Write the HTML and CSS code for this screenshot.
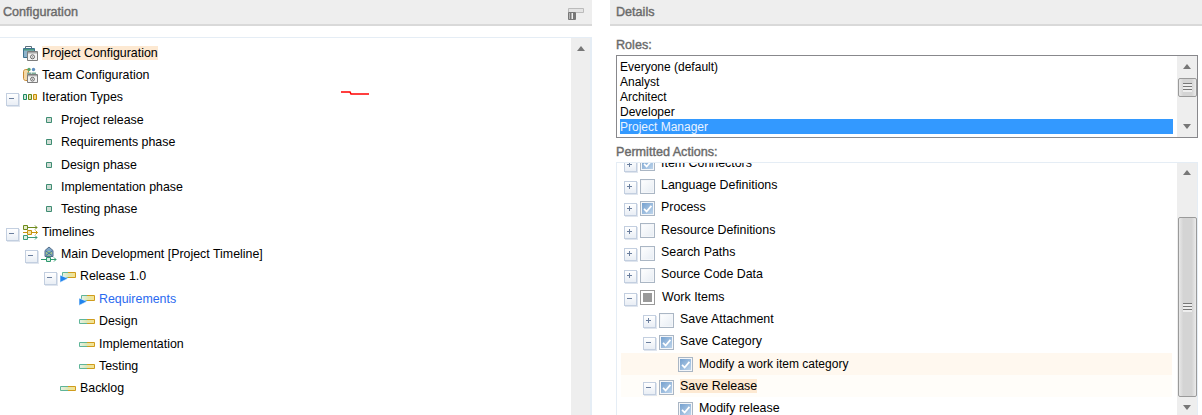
FILE: index.html
```html
<!DOCTYPE html>
<html lang="en">
<head>
<meta charset="utf-8">
<title>Configuration</title>
<link rel="stylesheet" href="styles.css">
</head>
<body>
<svg class="defs" aria-hidden="true">
  <defs>
    <linearGradient id="barfill" x1="0" x2="1" y1="0" y2="0">
      <stop offset="0" stop-color="#e4f2ea"/><stop offset=".5" stop-color="#dfe6b0"/><stop offset="1" stop-color="#fae28a"/>
    </linearGradient>
    <symbol id="i-project" viewBox="0 0 16 16">
      <path d="M1.500 3.500h11v9h-11z" fill="#8fb4cc" stroke="#3f7391"/>
      <path d="M3.500 3V1.500h6V3" fill="none" stroke="#5b6f7c"/>
      <path d="M2 4h10v1.500H2z" fill="#4d9a7d"/>
      <path d="M5.500 6.500h10v9h-10z" fill="#f3f3f3" stroke="#7d7d7d"/>
      <path d="M6 7h9v1.500H6z" fill="#a9a9a9"/>
      <circle cx="10.500" cy="11.800" r="2" fill="none" stroke="#666"/>
      <circle cx="10.500" cy="11.800" r=".6" fill="#666"/>
    </symbol>
    <symbol id="i-team" viewBox="0 0 16 16">
      <path d="M1.500 4.500c0-1 1-2 2-2h3v11h-3c-1 0-2-1-2-2z" fill="#f4d9a8" stroke="#c98a32"/>
      <circle cx="7" cy="2.500" r="1.700" fill="#5aa56a"/>
      <circle cx="11.500" cy="2.500" r="1.700" fill="#5f8fc0"/>
      <path d="M5 7V5.500h4V7zM9.500 7V5.500h4.500V7z" fill="#7fae9a"/>
      <path d="M5.500 7.500h10v8h-10z" fill="#f3f3f3" stroke="#7d7d7d"/>
      <path d="M6 8h9v1.300H6z" fill="#a9a9a9"/>
      <circle cx="10.500" cy="12.200" r="1.900" fill="none" stroke="#666"/>
      <circle cx="10.500" cy="12.200" r=".6" fill="#666"/>
    </symbol>
    <symbol id="i-iter" viewBox="0 0 16 16">
      <path d="M1.500 5.500h3v5h-3z" fill="#cfe4d8" stroke="#1f8a60"/>
      <path d="M6.500 5.500h3v5h-3z" fill="#dbe4b0" stroke="#64851a"/>
      <path d="M11.500 5.500h3v5h-3z" fill="#f2d98a" stroke="#c48c08"/>
    </symbol>
    <symbol id="i-bullet" viewBox="0 0 16 16">
      <path d="M5.500 5.500h5v5h-5z" fill="#cfdcd4" stroke="#3f8d73"/>
    </symbol>
    <symbol id="i-timelines" viewBox="0 0 16 16">
      <path d="M4 3.500h11M13 1.500l2 2-2 2" fill="none" stroke="#6d8a1c"/>
      <path d="M1.500 1.500h4v4h-4z" fill="#e6ecc8" stroke="#6d8a1c"/>
      <path d="M1 8.500h14.500M13.500 6.500l2 2-2 2" fill="none" stroke="#c8930f"/>
      <path d="M5.500 6.500h4v4h-4z" fill="#f4e4a8" stroke="#c8930f"/>
      <path d="M4 13.500h11M13 11.500l2 2-2 2" fill="none" stroke="#3f9a78"/>
      <path d="M1.500 11.500h4v4h-4z" fill="#dcefe6" stroke="#3f9a78"/>
    </symbol>
    <symbol id="i-main" viewBox="0 0 16 16">
      <path d="M4 4.500 8 1l4 3.500v6H4z" fill="#7fa6c8" stroke="#566f88"/>
      <path d="M5 5h6v4.500H5z" fill="#9fc28a"/>
      <path d="M5 9.500 11 5M5 5l6 4.500" stroke="#3c6fb0" fill="none"/>
      <path d="M0 13.500h15M13 11.500l2 2-2 2" fill="none" stroke="#2f9a6f"/>
      <path d="M5.500 11.500h4v4h-4z" fill="#d8efe4" stroke="#2f9a6f"/>
    </symbol>
    <symbol id="i-bar" viewBox="0 0 16 16">
      <path d="M.5 6.500h15v4H.5z" fill="url(#barfill)"/>
      <path d="M8 6.500H.5v4H8" fill="none" stroke="#5fb598"/>
      <path d="M8 6.500h7.500v4H8" fill="none" stroke="#cf9c1e"/>
    </symbol>
    <symbol id="i-release" viewBox="0 0 16 16">
      <path d="M2.500 4.500h13v5h-13z" fill="url(#barfill)"/>
      <path d="M8 4.500H2.500v5H8" fill="none" stroke="#5fb598"/>
      <path d="M8 4.500h7.500v5H8" fill="none" stroke="#cf9c1e"/>
      <path d="M0 7v7.500L8 10.500z" fill="#2185ee" stroke="#fff" stroke-width=".6"/>
    </symbol>
    <symbol id="i-check" viewBox="0 0 15 15">
      <path d="M3.500 8l3 3L12 4.500" fill="none" stroke="#fff" stroke-width="2"/>
    </symbol>
  </defs>
</svg>

<main class="app">
  <section class="pane">
    <header class="pane-head">
      <h2 class="pane-title">Configuration</h2>
      <svg class="restore" viewBox="0 0 16 12" width="16" height="12" aria-hidden="true">
        <path d="M.5 .5h15v4H.5z" fill="#e4e4e4" stroke="#bbb"/>
        <path d="M.5 4.500h7v7h-7z" fill="#eee" stroke="#777"/>
        <path d="M1.500 5h2v6h-2zM5 5h2v6H5z" fill="#777"/>
      </svg>
    </header>
    <div class="tree-box config-box">
      <div class="tree-scroll">
        <div class="row lv0"><span class="exp none"></span><svg class="ic"><use href="#i-project"/></svg><span class="lbl sel">Project Configuration</span></div>
        <div class="row lv0"><span class="exp none"></span><svg class="ic"><use href="#i-team"/></svg><span class="lbl">Team Configuration</span></div>
        <div class="row lv0"><span class="exp minus"></span><svg class="ic"><use href="#i-iter"/></svg><span class="lbl">Iteration Types</span></div>
        <div class="row lv1"><span class="exp none"></span><svg class="ic"><use href="#i-bullet"/></svg><span class="lbl">Project release</span></div>
        <div class="row lv1"><span class="exp none"></span><svg class="ic"><use href="#i-bullet"/></svg><span class="lbl">Requirements phase</span></div>
        <div class="row lv1"><span class="exp none"></span><svg class="ic"><use href="#i-bullet"/></svg><span class="lbl">Design phase</span></div>
        <div class="row lv1"><span class="exp none"></span><svg class="ic"><use href="#i-bullet"/></svg><span class="lbl">Implementation phase</span></div>
        <div class="row lv1"><span class="exp none"></span><svg class="ic"><use href="#i-bullet"/></svg><span class="lbl">Testing phase</span></div>
        <div class="row lv0"><span class="exp minus"></span><svg class="ic"><use href="#i-timelines"/></svg><span class="lbl">Timelines</span></div>
        <div class="row lv1"><span class="exp minus"></span><svg class="ic"><use href="#i-main"/></svg><span class="lbl">Main Development [Project Timeline]</span></div>
        <div class="row lv2"><span class="exp minus"></span><svg class="ic"><use href="#i-release"/></svg><span class="lbl">Release 1.0</span></div>
        <div class="row lv3"><span class="exp none"></span><svg class="ic"><use href="#i-release"/></svg><span class="lbl link">Requirements</span></div>
        <div class="row lv3"><span class="exp none"></span><svg class="ic"><use href="#i-bar"/></svg><span class="lbl">Design</span></div>
        <div class="row lv3"><span class="exp none"></span><svg class="ic"><use href="#i-bar"/></svg><span class="lbl">Implementation</span></div>
        <div class="row lv3"><span class="exp none"></span><svg class="ic"><use href="#i-bar"/></svg><span class="lbl">Testing</span></div>
        <div class="row lv2"><span class="exp none"></span><svg class="ic"><use href="#i-bar"/></svg><span class="lbl">Backlog</span></div>
      </div>
      <div class="sbar config-sbar"><span class="arrow up"></span></div>
    </div>
    <svg class="scribble" viewBox="0 0 28 4" width="28" height="4" aria-hidden="true">
      <path d="M0 1h9l1 2h18" fill="none" stroke="#f00" stroke-width="1.600"/>
    </svg>
  </section>

  <section class="pane details">
    <header class="pane-head">
      <h2 class="pane-title">Details</h2>
    </header>
    <div class="details-body">
      <div class="field-label roles-label">Roles:</div>
      <div class="listbox">
        <ul class="options">
          <li>Everyone (default)</li>
          <li>Analyst</li>
          <li>Architect</li>
          <li>Developer</li>
          <li class="picked">Project Manager</li>
        </ul>
        <div class="sbar list-sbar">
          <span class="arrow up"></span>
          <span class="thumb small"><span class="grip"></span></span>
          <span class="arrow down"></span>
        </div>
      </div>
      <div class="field-label actions-label">Permitted Actions:</div>
      <div class="tree-box actions-box">
        <div class="tree-scroll actions-scroll">
          <div class="actions-inner">
            <div class="row act lv0"><span class="exp plus"></span><span class="cb on"><svg class="tick"><use href="#i-check"/></svg></span><span class="lbl">Item Connectors</span></div>
            <div class="row act lv0"><span class="exp plus"></span><span class="cb"></span><span class="lbl">Language Definitions</span></div>
            <div class="row act lv0"><span class="exp plus"></span><span class="cb on"><svg class="tick"><use href="#i-check"/></svg></span><span class="lbl">Process</span></div>
            <div class="row act lv0"><span class="exp plus"></span><span class="cb"></span><span class="lbl">Resource Definitions</span></div>
            <div class="row act lv0"><span class="exp plus"></span><span class="cb"></span><span class="lbl">Search Paths</span></div>
            <div class="row act lv0"><span class="exp plus"></span><span class="cb"></span><span class="lbl">Source Code Data</span></div>
            <div class="row act lv0"><span class="exp minus"></span><span class="cb mixed"></span><span class="lbl">Work Items</span></div>
            <div class="row act lv1"><span class="exp plus"></span><span class="cb"></span><span class="lbl">Save Attachment</span></div>
            <div class="row act lv1"><span class="exp minus"></span><span class="cb on"><svg class="tick"><use href="#i-check"/></svg></span><span class="lbl">Save Category</span></div>
            <div class="row act lv2 hl"><span class="exp none"></span><span class="cb on"><svg class="tick"><use href="#i-check"/></svg></span><span class="lbl tight">Modify a work item category</span></div>
            <div class="row act lv1 hl-soft"><span class="exp minus"></span><span class="cb on"><svg class="tick"><use href="#i-check"/></svg></span><span class="lbl sel">Save Release</span></div>
            <div class="row act lv2"><span class="exp none"></span><span class="cb on"><svg class="tick"><use href="#i-check"/></svg></span><span class="lbl">Modify release</span></div>
          </div>
        </div>
        <div class="sbar actions-sbar">
          <span class="arrow up"></span>
          <span class="thumb large"><span class="grip"></span></span>
          <span class="arrow down"></span>
        </div>
      </div>
    </div>
  </section>
</main>
</body>
</html>
```
FILE: styles.css
```css
* { box-sizing: border-box; }

html, body {
  margin: 0;
  height: 415px;
  overflow: hidden;
  background: #fff;
  font-family: "Liberation Sans", Arial, sans-serif;
  font-size: 12px;
  color: #000;
}

.defs { position: absolute; width: 0; height: 0; }

.app {
  display: flex;
  gap: 18px;
  height: 415px;
}

.pane {
  position: relative;
  flex: 0 0 592px;
  display: flex;
  flex-direction: column;
}

.pane-head {
  flex: none;
  height: 26px;
  padding: 0 8px 0 3px;
  display: flex;
  align-items: center;
  justify-content: space-between;
  background: #eee;
  border-bottom: 2px solid #d9d9d9;
}

.details .pane-head { padding-left: 6px; }

.pane-title {
  margin: 0;
  font-size: 12.6px;
  font-weight: 400;
  color: #6a6a6a;
  -webkit-text-stroke: .4px #6a6a6a;
}

.restore { margin-top: 4px; }

.tree-box {
  display: flex;
  min-height: 0;
  border-top: 1px solid #e5edf5;
  border-left: 1px solid #e5edf5;
}

.config-box {
  flex: 1;
  margin-top: 11px;
  border-left: 0;
  border-right: 2px solid #e5edf5;
}

.tree-scroll {
  flex: 1;
  min-width: 0;
  padding-top: 3.4px;
  overflow: hidden;
}

.row {
  height: 22.4px;
  display: flex;
  align-items: center;
  white-space: nowrap;
}

.lv0 { padding-left: 6px; }
.lv1 { padding-left: 25px; }
.lv2 { padding-left: 44px; }
.lv3 { padding-left: 63px; }

.exp {
  flex: none;
  width: 16px;
  height: 11px;
  margin-top: 3px;
  position: relative;
}

.exp.minus::before,
.exp.plus::before {
  content: "";
  position: absolute;
  left: 0;
  top: 0;
  width: 11px;
  height: 11px;
  border: 1px solid #c3cfe0;
  box-shadow: 1px 1px 0 #dfe5ee;
}

.exp.minus::before {
  background: linear-gradient(#fff, #e9eef5);
}

.exp.plus::before {
  background:
    linear-gradient(#6b7f9e, #6b7f9e) 4px 2px / 1px 5px no-repeat,
    linear-gradient(#fff, #e9eef5);
}

.exp.minus::after,
.exp.plus::after {
  content: "";
  position: absolute;
  left: 3px;
  top: 5px;
  width: 5px;
  height: 1px;
  background: #6b7f9e;
}

.ic {
  flex: none;
  width: 16px;
  height: 16px;
  margin-right: 4px;
}

.lbl {
  line-height: 14px;
  font-size: 12.4px;
}

.tight { font-size: 12px; }

.sel { background: #fde9d2; }

.link { color: #2a6af0; }

.sbar {
  flex: none;
  width: 19px;
  background: #eee;
  display: flex;
  flex-direction: column;
  align-items: center;
}

.arrow {
  flex: none;
  width: 0;
  height: 0;
  border-left: 4px solid transparent;
  border-right: 4px solid transparent;
}

.arrow.up { border-bottom: 5px solid #777; }
.arrow.down { border-top: 5px solid #777; }

.config-sbar { padding-top: 8px; }

.scribble {
  position: absolute;
  left: 341px;
  top: 91px;
}

.details-body {
  flex: 1;
  min-height: 0;
  display: flex;
  flex-direction: column;
  padding-left: 6px;
  padding-right: 4px;
}

.field-label {
  flex: none;
  height: 14px;
  line-height: 14px;
  font-size: 12.6px;
  color: #6a6a6a;
  -webkit-text-stroke: .4px #6a6a6a;
}

.roles-label { margin-top: 12px; margin-bottom: 3px; }
.actions-label { margin-top: 7px; margin-bottom: 3px; }

.listbox {
  flex: none;
  height: 83px;
  display: flex;
  border: 1px solid #88888c;
  background: #fff;
}

.options {
  flex: 1;
  margin: 0;
  padding: 3px 4px 0 3px;
  list-style: none;
}

.options li {
  height: 15px;
  line-height: 17px;
}

.options .picked {
  background: #39f;
  color: #eaf3ff;
}

.list-sbar {
  width: 20px;
  padding-top: 8px;
  padding-bottom: 8px;
}

.list-sbar .arrow.up { margin-bottom: 9px; }
.list-sbar .arrow.down { margin-top: auto; }

.thumb {
  flex: none;
  width: 19px;
  display: flex;
  align-items: center;
  justify-content: center;
  background: linear-gradient(90deg, #e8e8e8, #d4d4d4 25%, #d4d4d4 75%, #ebebeb);
  border: 1px solid #9a9a9a;
  border-radius: 2px;
}

.thumb.small { height: 19px; }
.thumb.large { height: 180px; margin-top: 42px; }

.grip {
  width: 9px;
  height: 9px;
  background: repeating-linear-gradient(#777 0 1px, #eee 1px 3px);
}

.actions-box {
  flex: 1;
  border-right: 1px solid #e5edf5;
}

.actions-scroll { padding: 0 5px 0 4px; }

.actions-inner { margin-top: -11.5px; }

.row.act { height: 22.35px; }

.act.lv0 { padding-left: 3px; }
.act.lv1 { padding-left: 22px; }
.act.lv2 { padding-left: 41px; }

.cb {
  flex: none;
  width: 15px;
  height: 15px;
  margin-top: 2px;
  margin-right: 6px;
  border: 1px solid #aab6c4;
  background: linear-gradient(135deg, #fff, #e6ecf3);
  box-shadow: inset 0 0 0 1px #f4f6f9;
}

.cb.on { background: linear-gradient(135deg, #6f9ccc, #c4d9ee); }

.cb.mixed {
  margin-right: 7px;
  border-color: #999;
  background: #999;
  box-shadow: inset 0 0 0 2px #fff;
}

.tick {
  display: block;
  width: 13px;
  height: 13px;
}

.hl { background: #fff8ef; }
.hl-soft { background: #fffdf9; }

.actions-sbar {
  width: 20px;
  padding-top: 7px;
  padding-bottom: 5px;
}

.actions-sbar .arrow.down { margin-top: auto; }
```
